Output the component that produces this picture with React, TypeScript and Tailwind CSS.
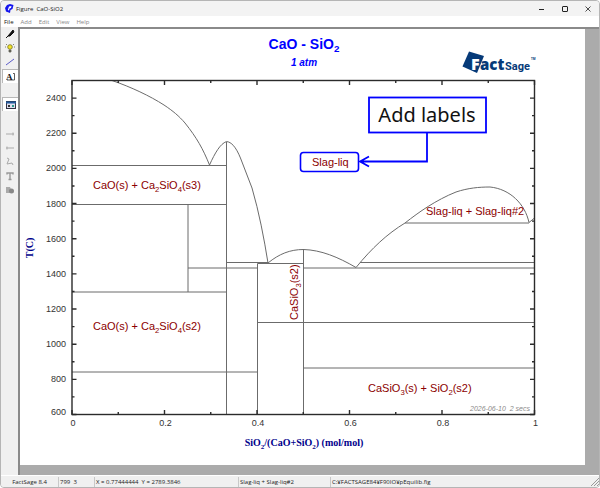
import type { ReactNode } from "react";

const ink = "#2b2b2b";
const curveInk = "#6b6b6b";

const left = 72;
const right = 534.5;
const top = 80.5;
const bottom = 414.5;

const xAt = (fraction: number) => left + fraction * (right - left);
const yAt = (temperature: number) => bottom - ((temperature - 600) * (bottom - top)) / 1900;

const yLabels = [600, 800, 1000, 1200, 1400, 1600, 1800, 2000, 2200, 2400];
const yMinor = [700, 900, 1100, 1300, 1500, 1700, 1900, 2100, 2300];
const xLabels = [0, 0.2, 0.4, 0.6, 0.8, 1];
const xMinor = [0.1, 0.3, 0.5, 0.7, 0.9];

const boundaries: [number, number, number, number][] = [
  [72, 165.5, 226.5, 165.5],
  [72, 204.5, 226.5, 204.5],
  [72, 292, 226.5, 292],
  [72, 372, 257.5, 372],
  [188, 204, 188, 292],
  [188, 268, 257.5, 268],
  [226.5, 142, 226.5, 414],
  [226.5, 262.5, 268, 262.5],
  [257.5, 263.5, 257.5, 414],
  [257.5, 263.5, 303.5, 263.5],
  [257.5, 322.5, 534.5, 322.5],
  [303.5, 249, 303.5, 414],
  [303.5, 268, 534.5, 268],
  [303.5, 368, 534.5, 368],
  [360, 262.5, 534.5, 262.5],
  [405, 223, 529, 223],
];

function Axes() {
  return (
    <g stroke={ink} strokeWidth="1.4" fill="none">
      <rect x={left} y={top} width={right - left} height={bottom - top} />
      {yLabels.map((t) => (
        <path key={t} d={`M${left} ${yAt(t)}h4.5M${right} ${yAt(t)}h-4.5`} />
      ))}
      {yMinor.map((t) => (
        <path key={t} d={`M${left} ${yAt(t)}h2.5M${right} ${yAt(t)}h-2.5`} />
      ))}
      {xLabels.map((x) => (
        <path key={x} d={`M${xAt(x)} ${top}v4.5M${xAt(x)} ${bottom}v-4.5`} />
      ))}
      {xMinor.map((x) => (
        <path key={x} d={`M${xAt(x)} ${top}v2.5M${xAt(x)} ${bottom}v-2.5`} />
      ))}
    </g>
  );
}

function Sub({ children, after }: { children: ReactNode; after?: ReactNode }) {
  return (
    <>
      <tspan dy="3" fontSize="70%">{children}</tspan>
      <tspan dy="-3">{after}</tspan>
    </>
  );
}

function Logo() {
  return (
    <g fill="#063a78" fontFamily="'Open Sans', sans-serif">
      <path d="M469 51.500L484 56L477 73L462.500 66.500Z" />
      <text x="471" y="70" fontSize="16" fontWeight="800" fill="#fff">F</text>
      <text x="480" y="70" fontSize="15" fontWeight="800">act</text>
      <text x="505" y="70" fontSize="11" fontWeight="bold" fontFamily="Roboto, sans-serif">Sage</text>
      <text x="531" y="60" fontSize="3" fontWeight="bold">TM</text>
    </g>
  );
}

function Diagram() {
  return (
    <svg viewBox="20 29 565 436" className="block h-full w-full bg-white font-['Liberation_Sans',Arial,sans-serif]" role="img" aria-label="CaO - SiO2 phase diagram">
      <g fill="#0000ff" textAnchor="middle" fontWeight="bold">
        <text x="304" y="49" fontSize="14">CaO - SiO<Sub>2</Sub></text>
        <text x="304" y="66" fontSize="10" fontStyle="italic">1 atm</text>
      </g>
      <Logo />
      <g stroke={curveInk} fill="none">
        {boundaries.map(([x1, y1, x2, y2], i) => (
          <line key={i} x1={x1} y1={y1} x2={x2} y2={y2} />
        ))}
        <path d="M112 80.5C131 87 150 96 164 105C173 111 179 116 185 123C197 138 203 149 209.500 165C215 153 220 144 226.500 141.500C233 142 238 151 242 162L252 188C259 212 264 238 268 263C279 254 290 249.500 303.500 249.500C321 250 338 257 356 267.500C372 248 387 234 405 223C419 212 436 200 456 192C468 188 479 187 490 187C510 189 525 204 529 222.500L534.500 218" />
      </g>
      <Axes />
      <g fill="#333" fontSize="9" textAnchor="end">
        {yLabels.map((t) => (
          <text key={t} x="66" y={yAt(t) + (t === 600 ? 0 : 3)}>{t}</text>
        ))}
      </g>
      <g fill="#333" fontSize="9" textAnchor="middle">
        {xLabels.map((x) => (
          <text key={x} x={xAt(x) + 1} y="426">{x}</text>
        ))}
      </g>
      <g fill="#00008b" fontWeight="bold" fontSize="10" textAnchor="middle" fontFamily="'Liberation Serif', 'Times New Roman', serif">
        <text x="304" y="446">SiO<Sub after="/(CaO+SiO">2</Sub><Sub after=") (mol/mol)">2</Sub></text>
        <text transform="translate(33 248) rotate(-90)">T(C)</text>
      </g>
      <g fill="#8b0000" fontSize="11">
        <text x="93" y="189">CaO(s) + Ca<Sub after="SiO">2</Sub><Sub after="(s3)">4</Sub></text>
        <text x="93" y="330">CaO(s) + Ca<Sub after="SiO">2</Sub><Sub after="(s2)">4</Sub></text>
        <text x="368" y="392">CaSiO<Sub after="(s) + SiO">3</Sub><Sub after="(s2)">2</Sub></text>
        <text transform="translate(298 320) rotate(-90)">CaSiO<Sub after="(s2)">3</Sub></text>
        <text x="426" y="215">Slag-liq + Slag-liq#2</text>
        <text x="312" y="166">Slag-liq</text>
      </g>
      <text x="530" y="411" fontSize="7" fontStyle="italic" textAnchor="end" fill="#8a8a8a">2026-06-10&#160; 2 secs</text>
      <g stroke="#0000ff" fill="none">
        <rect x="300.5" y="152.500" width="58" height="19" rx="3" strokeWidth="1.6" />
        <rect x="369" y="97.500" width="117" height="35" strokeWidth="1.8" />
        <path d="M427 133v28.500h-66M369 156.500l-9 5l9 5" strokeWidth="1.8" />
      </g>
      <text x="427" y="122" fontSize="20" textAnchor="middle" fill="#111" fontFamily="'Noto Sans', sans-serif">Add labels</text>
    </svg>
  );
}

function Tool({ label, active, children }: { label: string; active?: boolean; children: ReactNode }) {
  return (
    <button
      type="button"
      aria-label={label}
      className={`flex h-3.5 w-full items-center justify-center ${active ? "border-t border-l border-[#b8b8b8] bg-white" : ""}`}
    >
      <svg width="10" height="10" viewBox="0 0 10 10" fill="none" aria-hidden="true">
        {children}
      </svg>
    </button>
  );
}

function Toolbar() {
  return (
    <div className="flex w-[17px] shrink-0 flex-col bg-[#f0f0f0] pl-px">
      <Tool label="Pen"><path d="M1 9L4 6M3 7L8 1L9 3L5 7Z" stroke="#111" fill="#111" /></Tool>
      <Tool label="Hint">
        <circle cx="5" cy="4" r="2.300" fill="#f4e52a" stroke="#77721f" strokeWidth=".8" />
        <path d="M4 7h2v2H4ZM0 4h1M9 4h1M1 1l1 1M9 1L8 2" fill="#555" stroke="#665" strokeWidth=".8" />
      </Tool>
      <Tool label="Line"><path d="M1 8L9 2" stroke="#5a5ac8" /></Tool>
      <Tool label="Text label" active>
        <text x="0" y="8" fontSize="9" fontWeight="bold" fontFamily="'Liberation Serif', serif" fill="#111">A</text>
        <path d="M7 1.500h1.500v6.500H1" stroke="#333" strokeWidth=".8" />
      </Tool>
      <div className="h-3.5" />
      <Tool label="Properties" active>
        <rect x="0.500" y="1.500" width="9" height="7" fill="#dde" stroke="#334" />
        <path d="M0 2.500h10" stroke="#235a9c" strokeWidth="2" />
        <path d="M2 5h2v2H2Z" fill="#333" />
        <path d="M6 5h2v2H6Z" fill="#2a9a8a" />
      </Tool>
      <div className="h-4" />
      <Tool label="Arrow right"><path d="M1 5h8M8 3.500v3" stroke="#aaa" /></Tool>
      <Tool label="Arrow left"><path d="M1 5h8M2 3.500v3" stroke="#aaa" /></Tool>
      <Tool label="Curve"><path d="M2 1l2 1L2 7l5-1l1 2" stroke="#aaa" /></Tool>
      <Tool label="Text"><path d="M2 3.500V2h6v1.500M5 2v6M3.500 8.500h3" stroke="#999" strokeWidth="1.400" /></Tool>
      <Tool label="Shapes"><path d="M1 2h4l1 2v4H1Z" fill="#aaa" /><circle cx="6.500" cy="6" r="2.500" fill="#888" /></Tool>
    </div>
  );
}

export default function App() {
  return (
    <div className="flex h-screen flex-col overflow-hidden rounded border border-[#b5b5b5] bg-[#f0f0f0] font-['Open_Sans','Noto_Sans',sans-serif] text-[6px] leading-[10px] text-[#222]">
      <header className="flex h-[15px] shrink-0 items-center bg-[#f3f3f3] pl-1">
        <svg width="9" height="9" viewBox="0 0 9 9" aria-hidden="true">
          <path d="M2 1L5 0L8.500 1L7.500 5L5.500 6L5 9L1 7.500L0 4Z" fill="#1414ee" />
          <path d="M4 2.500L6.500 2L6 4L4.500 4.500L4 6.500L2.800 6Z" fill="#fff" />
        </svg>
        <h1 className="ml-0.5 whitespace-pre">Figure  CaO-SiO2</h1>
        <div className="ml-auto flex text-[#222]">
          <button type="button" aria-label="Minimize" className="flex w-[23px] justify-center"><svg width="6" height="6" viewBox="0 0 6 6"><path d="M0 3.500h5" stroke="currentColor" /></svg></button>
          <button type="button" aria-label="Maximize" className="flex w-[23px] justify-center"><svg width="6" height="6" viewBox="0 0 6 6"><rect x=".5" y=".5" width="5" height="5" rx=".5" fill="none" stroke="currentColor" /></svg></button>
          <button type="button" aria-label="Close" className="flex w-[23px] justify-center"><svg width="6" height="6" viewBox="0 0 6 6"><path d="M.5 .5l5 5M5.500 .5l-5 5" stroke="currentColor" strokeWidth=".8" /></svg></button>
        </div>
      </header>
      <nav className="flex h-[11px] shrink-0 items-center gap-[7px] bg-white pl-[3px] text-[#888]">
        <button type="button" className="text-[#111]">File</button>
        <button type="button">Add</button>
        <button type="button">Edit</button>
        <button type="button">View</button>
        <button type="button">Help</button>
      </nav>
      <div className="flex min-h-0 flex-1">
        <Toolbar />
        <main className="min-w-0 flex-1 border-t-2 border-l-2 border-[#8a8a8a] bg-[#ababab] pr-3.5 pb-2.5">
          <Diagram />
        </main>
      </div>
      <footer className="flex h-3 shrink-0 items-center border-t border-white bg-[#f0f0f0]">
        <span className="w-[57px] text-center">FactSage 8.4</span>
        <span className="w-9 border-l border-[#c8c8c8] pl-px whitespace-pre">799  3</span>
        <span className="w-36 border-l border-[#c8c8c8] pl-px whitespace-pre">X = 0.77444444  Y = 2789.3846</span>
        <span className="w-[92px] border-l border-[#c8c8c8] pl-px">Slag-liq + Slag-liq#2</span>
        <span className="flex-1 border-l border-[#c8c8c8] pl-px">C:¥FACTSAGE84¥F90IO¥pEquilib.fig</span>
        <svg width="8" height="8" viewBox="0 0 8 8" aria-hidden="true"><path d="M0 8L8 0M3 8L8 3M6 8L8 6" stroke="#999" /></svg>
      </footer>
    </div>
  );
}
